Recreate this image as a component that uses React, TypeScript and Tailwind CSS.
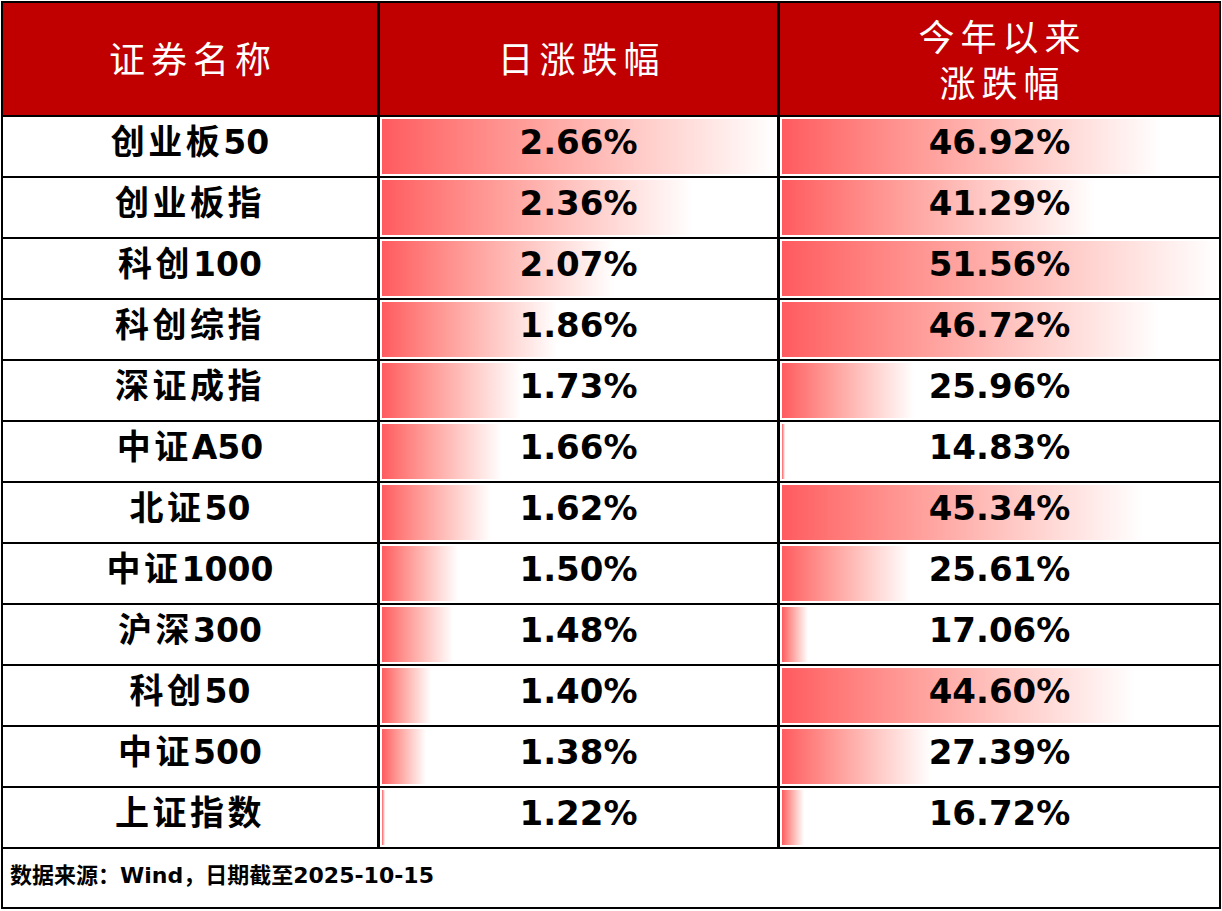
import React from "react"

const rows = [
  { name: "创业板50", day: 2.66, ytd: 46.92 },
  { name: "创业板指", day: 2.36, ytd: 41.29 },
  { name: "科创100", day: 2.07, ytd: 51.56 },
  { name: "科创综指", day: 1.86, ytd: 46.72 },
  { name: "深证成指", day: 1.73, ytd: 25.96 },
  { name: "中证A50", day: 1.66, ytd: 14.83 },
  { name: "北证50", day: 1.62, ytd: 45.34 },
  { name: "中证1000", day: 1.5, ytd: 25.61 },
  { name: "沪深300", day: 1.48, ytd: 17.06 },
  { name: "科创50", day: 1.4, ytd: 44.6 },
  { name: "中证500", day: 1.38, ytd: 27.39 },
  { name: "上证指数", day: 1.22, ytd: 16.72 },
]

const dayMin = Math.min(...rows.map((r) => r.day))
const dayMax = Math.max(...rows.map((r) => r.day))
const ytdMin = Math.min(...rows.map((r) => r.ytd))
const ytdMax = Math.max(...rows.map((r) => r.ytd))

// splits CJK runs from latin/digits so CJK can get a bit more spacing
function Name({ text }: { text: string }) {
  const parts = text.match(/[\u4e00-\u9fff]+|[^\u4e00-\u9fff]+/g) || []
  return (
    <span>
      {parts.map((p, i) =>
        /[\u4e00-\u9fff]/.test(p) ? (
          <span key={i} className="text-[34px] tracking-[3.5px]">
            {p}
          </span>
        ) : (
          <span key={i}>{p}</span>
        )
      )}
    </span>
  )
}

function BarCell({ value, min, max, width }: { value: number; min: number; max: number; width: number }) {
  const len = Math.max(3, ((value - min) / (max - min)) * (width - 4))
  return (
    <div className="relative h-[59px] bg-white flex items-center justify-center pb-[9px]">
      <div
        className="absolute left-[2px] top-[2px] bottom-[2px] bg-gradient-to-r from-[#ff5a5f] to-white"
        style={{ width: len }}
      />
      <span className="relative text-[34px] leading-[40px] font-bold text-black">{value.toFixed(2)}%</span>
    </div>
  )
}

export default function App() {
  return (
    <div className="w-[1222px] h-[911px] bg-white pt-px pl-px font-['DejaVu_Sans','Noto_Sans_CJK_SC',sans-serif]">
      <div className="w-[1220px] border-2 border-black bg-black grid grid-cols-[374px_397px_439px] gap-x-[3px] gap-y-[2px]">
        <div className="h-[112px] bg-[#c00000] flex items-center justify-center pl-[6px] pb-[4px] text-white text-[36px] leading-[46px] tracking-[6px] font-['Noto_Sans_CJK_SC',sans-serif] font-normal">
          证券名称
        </div>
        <div className="h-[112px] bg-[#c00000] flex items-center justify-center pl-[6px] pb-[4px] text-white text-[36px] leading-[46px] tracking-[6px] font-['Noto_Sans_CJK_SC',sans-serif] font-normal">
          日涨跌幅
        </div>
        <div className="h-[112px] bg-[#c00000] flex flex-col items-center justify-center pl-[6px] pb-[2px] text-white text-[36px] leading-[46px] tracking-[6px] font-['Noto_Sans_CJK_SC',sans-serif] font-normal">
          <span>今年以来</span>
          <span>涨跌幅</span>
        </div>

        {rows.map((r) => (
          <React.Fragment key={r.name}>
            <div className="h-[59px] bg-white flex items-center justify-center pb-[9px] text-[33px] leading-[40px] font-bold text-black">
              <Name text={r.name} />
            </div>
            <BarCell value={r.day} min={dayMin} max={dayMax} width={397} />
            <BarCell value={r.ytd} min={ytdMin} max={ytdMax} width={439} />
          </React.Fragment>
        ))}

        <div className="col-span-3 h-[58px] bg-white flex items-center pl-[7px] pb-[6px] text-[22px] font-bold text-black">
          数据来源：Wind，日期截至2025-10-15
        </div>
      </div>
    </div>
  )
}
